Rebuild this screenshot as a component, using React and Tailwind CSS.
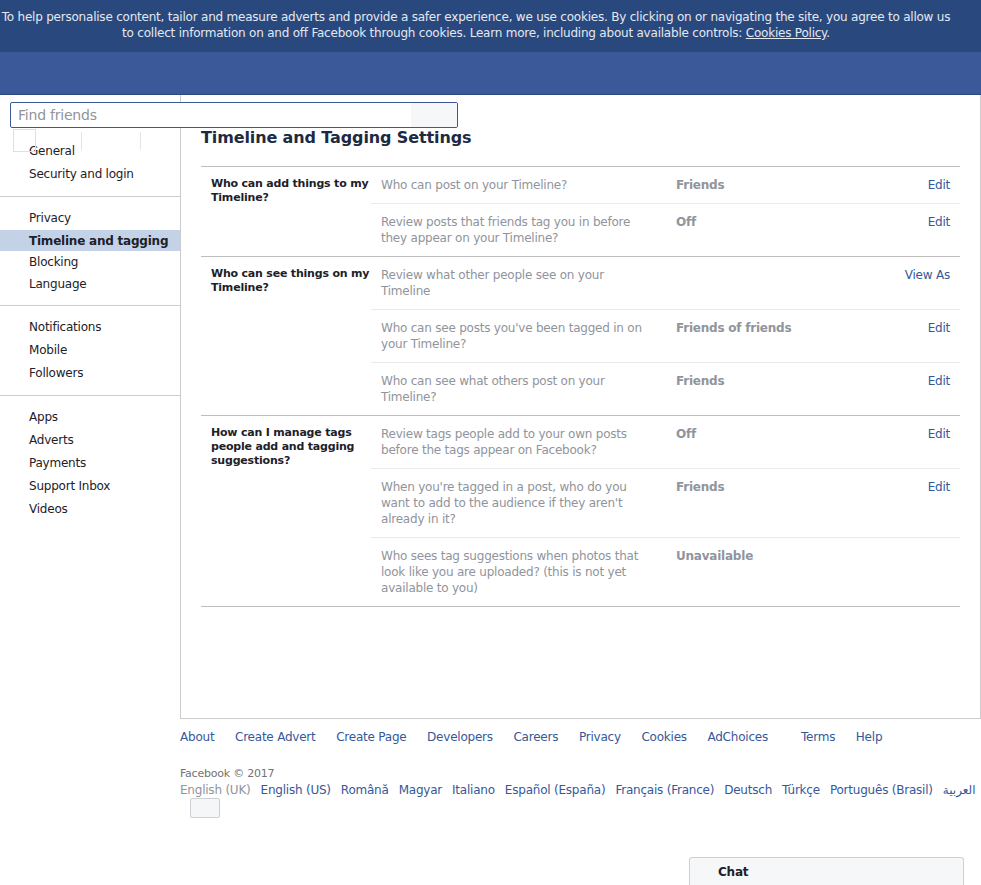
const font = { fontFamily: '"DejaVu Sans", "Noto Sans", sans-serif' };

const navGroups = [
  ["General", "Security and login"],
  ["Privacy", "Timeline and tagging", "Blocking", "Language"],
  ["Notifications", "Mobile", "Followers"],
  ["Apps", "Adverts", "Payments", "Support Inbox", "Videos"],
];

const sections = [
  {
    label: "Who can add things to my Timeline?",
    rows: [
      { q: "Who can post on your Timeline?", v: "Friends", a: "Edit" },
      { q: "Review posts that friends tag you in before they appear on your Timeline?", v: "Off", a: "Edit" },
    ],
  },
  {
    label: "Who can see things on my Timeline?",
    rows: [
      { q: "Review what other people see on your Timeline", v: "", a: "View As" },
      { q: "Who can see posts you've been tagged in on your Timeline?", v: "Friends of friends", a: "Edit" },
      { q: "Who can see what others post on your Timeline?", v: "Friends", a: "Edit" },
    ],
  },
  {
    label: "How can I manage tags people add and tagging suggestions?",
    rows: [
      { q: "Review tags people add to your own posts before the tags appear on Facebook?", v: "Off", a: "Edit" },
      { q: "When you're tagged in a post, who do you want to add to the audience if they aren't already in it?", v: "Friends", a: "Edit" },
      { q: "Who sees tag suggestions when photos that look like you are uploaded? (this is not yet available to you)", v: "Unavailable", a: "" },
    ],
  },
];

const footerLinks = ["About", "Create Advert", "Create Page", "Developers", "Careers", "Privacy", "Cookies", "AdChoices", "Terms", "Help"];
const languages = ["English (US)", "Română", "Magyar", "Italiano", "Español (España)", "Français (France)", "Deutsch", "Türkçe", "Português (Brasil)", "العربية"];

function NavItem({ label }) {
  const active = label === "Timeline and tagging";
  if (active) {
    return (
      <div className="mt-[1px] flex h-[21px] items-center bg-[#c4d2e7] pl-[29px] font-bold text-[#1d2129]">
        {label}
      </div>
    );
  }
  const h = label === "Blocking" ? "h-[22px]" : label === "Language" ? "h-[21px]" : "h-[23px]";
  return <div className={`flex ${h} items-center pl-[29px] text-[#1d2129]`}>{label}</div>;
}

function Sidebar() {
  return (
    <aside className="w-[180px] shrink-0 pt-[44px] text-[12px]">
      {navGroups.map((group, i) => (
        <div key={i} className={i === 0 ? "pb-[11px]" : "border-t border-[#ccc] pt-[9px] pb-[11px]"}>
          {group.map((item) => (
            <NavItem key={item} label={item} />
          ))}
        </div>
      ))}
    </aside>
  );
}

function Section({ section }) {
  return (
    <div className="flex border-b border-[#bdbdbd]">
      <div className="w-[170px] shrink-0 pl-[10px] pt-[10px] text-[11px] leading-[14px] font-bold tracking-[-0.2px] text-[#1d2129]">
        {section.label}
      </div>
      <div className="flex-1">
        {section.rows.map((row, i) => (
          <div
            key={i}
            className={`flex pt-[10px] pb-[10px] text-[12px] leading-[16px] ${
              i < section.rows.length - 1 ? "border-b border-[#e9ebee]" : ""
            }`}
          >
            <div className="w-[295px] shrink-0 px-[10px] text-[#90949c]">{row.q}</div>
            <div className="flex-1 pl-[10px] font-bold text-[#90949c]">{row.v}</div>
            <div className="shrink-0 pr-[10px] text-right text-[#365899]">{row.a}</div>
          </div>
        ))}
      </div>
    </div>
  );
}

export default function App() {
  return (
    <div className="relative min-h-[885px] bg-white tracking-[-0.22px]" style={font}>
      <div className="bg-[#29487d] pt-[9px] pb-[11px] text-[12px] leading-[16px] text-[#e4e8f0]">
        <p className="w-[952px] text-center">
          To help personalise content, tailor and measure adverts and provide a safer experience, we use cookies. By
          clicking on or navigating the site, you agree to allow us to collect information on and off Facebook through
          cookies. Learn more, including about available controls: <span className="underline">Cookies Policy</span>.
        </p>
      </div>
      <div className="h-[43px] border-b border-[#29487d] bg-[#3b5998]" />

      <div className="flex">
        <Sidebar />
        <main className="h-[624px] w-[801px] border-x border-b border-[#ccc] px-[20px] pt-[33px]">
          <h2 className="text-[16px] leading-[20px] font-bold tracking-[-0.12px] text-[#1d2a44]">
            Timeline and Tagging Settings
          </h2>
          <div className="mt-[18px] border-t border-[#bdbdbd]">
            {sections.map((s, i) => (
              <Section key={i} section={s} />
            ))}
          </div>
        </main>
      </div>

      <footer className="pl-[180px] pt-[10px]">
        <div className="flex text-[12px] leading-[16px] text-[#365899]">
          {footerLinks.map((l) => (
            <span key={l} className={l === "AdChoices" ? "mr-[33px]" : "mr-[20.6px]"}>
              {l}
            </span>
          ))}
        </div>
        <div className="mt-[22px] text-[11px] leading-[14px] text-[#737373]">Facebook © 2017</div>
        <div className="mt-[1px] flex gap-[10px] text-[12px] leading-[16px] whitespace-nowrap">
          <span className="text-[#90949c]">English (UK)</span>
          {languages.map((l) => (
            <span key={l} className="text-[#365899]">
              {l}
            </span>
          ))}
        </div>
        <div className="ml-[10px] h-[20px] w-[30px] rounded-[2px] border border-[#ccd0d5] bg-[#f5f6f7]" />
      </footer>

      {/* header search, rendered over the page */}
      <div className="absolute left-[10px] top-[102px] flex h-[26px] w-[448px] overflow-hidden rounded-[2px] border border-[#3b5998] bg-white">
        <div className="flex flex-1 items-center pl-[7px] text-[14px] text-[#90949c]">Find friends</div>
        <div className="w-[46px] bg-[#f6f7f9]" />
      </div>
      <div className="absolute left-[13px] top-[129px] h-[23px] w-[23px] border border-[#dddfe2]" />
      <div className="absolute left-[81px] top-[132px] h-[18px] w-px bg-[#e5e5e5]" />
      <div className="absolute left-[140px] top-[132px] h-[18px] w-px bg-[#e5e5e5]" />

      <div className="fixed bottom-0 right-[17px] flex h-[28px] w-[275px] items-center rounded-t-[3px] border border-b-0 border-[#ccd0d5] bg-[#f6f7f9] pl-[28px] text-[12px] font-bold text-[#1d2129]">
        Chat
      </div>
    </div>
  );
}
